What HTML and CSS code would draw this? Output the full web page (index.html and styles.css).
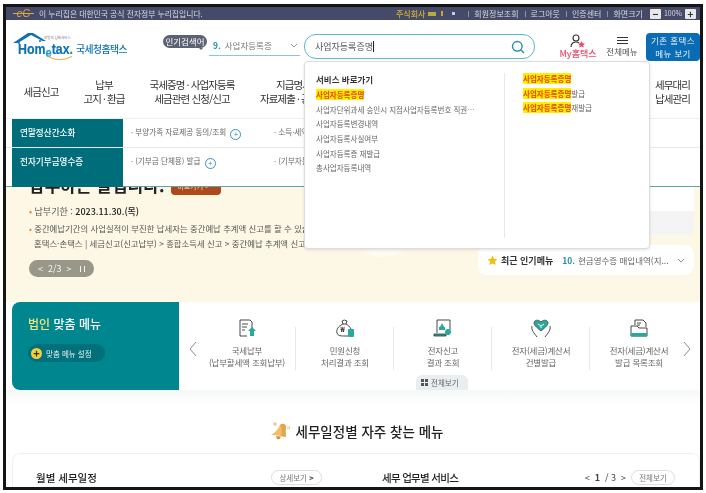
FILE: index.html
```html
<!DOCTYPE html>
<html lang="ko">
  <head>
    <meta charset="UTF-8" />
    <meta name="viewport" content="width=device-width, initial-scale=1.0" />
    <title>국세청 홈택스</title>
    <link rel="stylesheet" href="styles.css">
  </head>
  <body>
    <div class="frame">
      <div class="topbar">
        <div class="gov">
          <span class="eg">eG</span>
          <span>이 누리집은 대한민국 공식 전자정부 누리집입니다.</span>
        </div>
        <div class="util">
          <span class="company">주식회사</span>
          <span class="flag"></span>
          <span class="pin"></span>
          <span class="dot"></span>
          <a>회원정보조회</a>
          <a>로그아웃</a>
          <a>인증센터</a>
          <a>화면크기</a>
          <div class="zoomer">
            <b>−</b>
            <span>100%</span>
            <b>+</b>
          </div>
        </div>
      </div>

      <header class="header">
        <div class="logo">
          <svg width="62" height="30" viewBox="0 0 62 30">
            <path d="M0 11 L15 1 L20 1 L33 9 L29.5 9 L18 3 L5 11 Z" fill="#0d72b5" />
            <path d="M6 10 V12 M27 8 V10" stroke="#0d72b5" stroke-width="1.5" />
            <text x="5" y="21.5" class="logo-main" textLength="55" lengthAdjust="spacingAndGlyphs">Hom<tspan class="logo-e" dy="3.5">e</tspan><tspan dy="-3">tax</tspan><tspan class="logo-dot">.</tspan></text>
            <text x="31" y="7" class="logo-small">안방의 납세서비스</text>
            <path d="M35 24.5 Q46 31 59 24.5" fill="none" stroke="#eaa73c" stroke-width="1" />
          </svg>
          <span class="logo-name">국세청홈택스</span>
        </div>
        <div class="popular">
          <span class="bubble">인기검색어</span>
          <div class="popular-line">
            <b>9.</b>
            <span>사업자등록증</span>
            <svg class="chev" width="8" height="5" viewBox="0 0 8 5"><path d="M1 1 L4 4 L7 1" /></svg>
          </div>
        </div>
        <div class="search">
          <span>사업자등록증명</span><i class="caret"></i>
          <svg class="glass" width="14" height="14" viewBox="0 0 14 14">
            <circle cx="6.3" cy="6.3" r="4.8" />
            <path d="M10 10 L13 13" />
          </svg>
        </div>
        <div class="myhome">
          <svg width="16" height="14" viewBox="0 0 16 14">
            <circle cx="6" cy="4" r="3" fill="none" stroke="#333" stroke-width="1.1" />
            <path d="M1 13 C1 9 4 8 6 8 C7 8 8 8 9 9" fill="none" stroke="#333" stroke-width="1.1" />
            <path d="M11.5 7 L12.7 9.2 L15 9.6 L13.3 11.2 L13.8 13.5 L11.5 12.4 L9.2 13.5 L9.7 11.2 L8 9.6 L10.3 9.2 Z" fill="#e8506e" />
          </svg>
          <span>My홈택스</span>
        </div>
        <div class="allmenu">
          <span class="burger"></span>
          <span>전체메뉴</span>
        </div>
        <div class="oldmenu">기존 홈택스<br />메뉴 보기</div>
      </header>

      <nav class="gnb">
        <a class="g1">세금신고</a>
        <a class="g2">납부<br />고지 · 환급</a>
        <a class="g3">국세증명 · 사업자등록<br />세금관련 신청/신고</a>
        <a class="g4">지급명세서<br />자료제출 · 공익법인</a>
        <a class="g5">세무대리<br />납세관리</a>
      </nav>

      <div class="mega">
        <div class="mega-row short">
          <div class="mega-label">연말정산간소화</div>
          <div class="mega-link first">· 부양가족 자료제공 동의/조회 <i class="plus">+</i></div>
          <div class="mega-link">· 소득·세액공제 자료 조회</div>
        </div>
        <div class="mega-row tall">
          <div class="mega-label">전자기부금영수증</div>
          <div class="mega-link first">· (기부금 단체용) 발급 <i class="plus">+</i></div>
          <div class="mega-link">· (기부자용) 조회</div>
        </div>
      </div>

      <section class="hero">
        <div class="hero-left">
          <div class="hero-title">
            <h1>납부하는 달입니다.</h1>
            <span class="more">바로가기 &gt;</span>
          </div>
          <p class="due"><i>•</i> 납부기한 : <b>2023.11.30.(목)</b></p>
          <p class="note"><i>•</i> 중간예납기간의 사업실적이 부진한 납세자는 중간예납 추계액 신고를 할 수 있습니다.</p>
          <p class="note path">홈택스·손택스 | 세금신고(신고납부) &gt; 종합소득세 신고 &gt; 중간예납 추계액 신고</p>
          <div class="pager">
            <span>&lt;</span>
            <span>2/3</span>
            <span>&gt;</span>
            <span class="pause"></span>
          </div>
        </div>
        <div class="hero-right">
          <div class="side-panel"></div>
          <div class="recent">
            <svg width="11" height="11" viewBox="0 0 12 12"><path d="M6 .5 L7.7 4 L11.5 4.5 L8.7 7.2 L9.4 11 L6 9.2 L2.6 11 L3.3 7.2 L.5 4.5 L4.3 4 Z" fill="#f5c013" /></svg>
            <b class="recent-title">최근 인기메뉴</b>
            <b class="recent-num">10.</b>
            <span class="recent-text">현금영수증 매입내역(지...</span>
            <svg class="chev" width="8" height="5" viewBox="0 0 8 5"><path d="M1 1 L4 4 L7 1" /></svg>
          </div>
        </div>
      </section>

      <section class="custom">
        <div class="custom-left">
          <h2><em>법인</em> 맞춤 메뉴</h2>
          <div class="custom-set"><i>+</i> 맞춤 메뉴 설정</div>
        </div>
        <div class="custom-right">
          <svg class="arrow" width="10" height="16" viewBox="0 0 10 16"><path d="M8 1 L2 8 L8 15" /></svg>
          <div class="item">
            <svg width="20" height="20" viewBox="0 0 20 20">
              <path d="M3 2 H13 L15 4 V10 M3 2 V18 H10" class="ln" />
              <path d="M5 6 H11 M5 9 H10 M5 12 H8" class="ln" />
              <path d="M15 9 L19 13 H17 V18 H13 V13 H11 Z" fill="#2aa7a0" />
            </svg>
            <span>국세납부<br />(납부할세액 조회납부)</span>
          </div>
          <div class="item">
            <svg width="20" height="20" viewBox="0 0 20 20">
              <path d="M7 3 Q9 1 12 3 L11 6 H8 Z" class="ln" />
              <path d="M8 6 C3 8 1 12 2 15 C3 18 6 18 10 18 H13" class="ln" />
              <path d="M11 6 C13 7 15 9 16 11" class="ln" />
              <text x="5.5" y="14" class="won">₩</text>
              <rect x="13" y="11" width="6" height="8" rx="1" fill="#2aa7a0" />
            </svg>
            <span>민원신청<br />처리결과 조회</span>
          </div>
          <div class="item">
            <svg width="20" height="20" viewBox="0 0 20 20">
              <path d="M4 2 H17 V12 M4 2 V15" class="ln" />
              <path d="M1 16 H13 V18 H1 Z" fill="#2aa7a0" stroke="#333" stroke-width=".8" />
              <path d="M9 5 L11 9 H7 Z M6 9 H12 V12 H6 Z" fill="#2aa7a0" />
              <circle cx="15" cy="14" r="3" fill="#2aa7a0" />
            </svg>
            <span>전자신고<br />결과 조회</span>
          </div>
          <div class="item">
            <svg width="20" height="20" viewBox="0 0 20 20">
              <path d="M10 13 C5 9 3 7 3 5 C3 2 7 1 10 4 C13 1 17 2 17 5 C17 7 15 9 10 13 Z" fill="#2aa7a0" stroke="#333" stroke-width=".7" />
              <path d="M1 8 C0 12 3 15 6 19 M19 8 C20 12 17 15 14 19" class="ln" />
              <path d="M7 6 L10 8 L13 6 M10 8 V10" fill="none" stroke="#fff" stroke-width=".9" />
            </svg>
            <span>전자(세금)계산서<br />건별발급</span>
          </div>
          <div class="item">
            <svg width="20" height="20" viewBox="0 0 20 20">
              <path d="M6 7 V2 H14 L17 5 V9" class="ln" />
              <path d="M8 5 H12 M8 7 H11" class="ln" />
              <path d="M2 8 H8 L10 10 H18 V18 H2 Z" class="ln" />
              <rect x="2" y="15" width="16" height="3.5" fill="#2aa7a0" />
            </svg>
            <span>전자(세금)계산서<br />발급 목록조회</span>
          </div>
          <svg class="arrow next" width="10" height="16" viewBox="0 0 10 16"><path d="M2 1 L8 8 L2 15" /></svg>
          <div class="all-tab"><span class="grid-ico"><i></i><i></i><i></i><i></i></span>전체보기</div>
        </div>
      </section>

      <div class="often">
        <svg width="20" height="20" viewBox="0 0 20 20">
          <path d="M1 14 Q7 11 10 4 Q14 1 16 5 Q15 10 16 16 Q8 14 1 14 Z" fill="#f0bd68" />
          <path d="M10 4 Q14 1 16 5 Q15 10 16 16 Q13 15 11 15 Q13 9 10 4 Z" fill="#e3a548" />
          <path d="M6 15 L11 15.5 Q10 19 7 18 Z" fill="#d8912f" />
          <circle cx="5" cy="3" r="1.2" fill="none" stroke="#d8912f" stroke-width=".7" />
          <path d="M18 5 V9 M19.5 5 V8" stroke="#e8c27c" stroke-width=".8" />
        </svg>
        <h2>세무일정별 자주 찾는 메뉴</h2>
      </div>

      <section class="bottom">
        <div class="bottom-col left">
          <h3>월별 세무일정</h3>
          <span class="round-btn">상세보기 <b>&gt;</b></span>
        </div>
        <div class="bottom-col right">
          <h3 class="tight">세무 업무별 서비스</h3>
          <div class="paging">
            <span>&lt;</span> <b>1</b> / 3 <span>&gt;</span>
            <span class="round-btn">전체보기</span>
          </div>
        </div>
      </section>

      <div class="suggest">
        <div class="suggest-left">
          <h4>서비스 바로가기</h4>
          <ul>
            <li><mark>사업자등록증명</mark></li>
            <li>사업자단위과세 승인시 지점사업자등록번호 직권…</li>
            <li>사업자등록변경내역</li>
            <li>사업자등록사실여부</li>
            <li>사업자등록증 재발급</li>
            <li>총사업자등록내역</li>
          </ul>
        </div>
        <div class="suggest-right">
          <ul>
            <li><mark>사업자등록증명</mark></li>
            <li><mark>사업자등록증명</mark>발급</li>
            <li><mark>사업자등록증명</mark>재발급</li>
          </ul>
        </div>
      </div>
    </div>
  </body>
</html>
```

FILE: styles.css
```css
html,
body {
  margin: 0;
  height: 493px;
  overflow: hidden;
  background: #fff;
}

body {
  font-family: "Noto Sans CJK KR", "Noto Sans", sans-serif;
  color: #333;
}

.frame {
  position: relative;
  box-sizing: border-box;
  margin: 4px 3px 0;
  height: 486px;
  border: 3px solid #151515;
  overflow: hidden;
  background: #fff;
  filter: blur(0.4px);
}

h1, h2, h3, h4, p, ul {
  margin: 0;
  padding: 0;
}

i, em {
  font-style: normal;
}

ul {
  list-style: none;
}

/* top bar */
.topbar {
  display: flex;
  justify-content: space-between;
  align-items: center;
  height: 13px;
  padding: 0 4px 0 7px;
  background: #454a68;
  color: #d9dae2;
  font-size: 8px;
  line-height: 13px;
  white-space: nowrap;
}

.gov {
  display: flex;
  align-items: center;
  gap: 5px;
  font-size: 7.8px;
}

.eg {
  width: 21px;
  text-align: center;
  color: #e0a83a;
  font-family: "Liberation Sans", sans-serif;
  font-style: italic;
  font-size: 10px;
  background: linear-gradient(#e0a83a, #e0a83a) center / 100% 1px no-repeat;
}

.util {
  display: flex;
  align-items: center;
}

.company {
  color: #d6b02c;
  font-weight: 500;
  margin-right: 3px;
}

.flag {
  width: 8px;
  height: 4px;
  background: #b8ab3c;
  margin-right: 5px;
}

.pin {
  width: 2px;
  height: 5px;
  background: #c9a43a;
  margin-right: 9px;
}

.dot {
  width: 3px;
  height: 3px;
  background: #c9cbd8;
  margin-right: 7px;
}

.util a {
  padding-left: 6px;
  margin-left: 6px;
  background: linear-gradient(#8d90a6, #8d90a6) left center / 1px 6px no-repeat;
}

.zoomer {
  display: flex;
  align-items: center;
  gap: 3px;
  margin-left: 7px;
  font-size: 7px;
}

.zoomer b {
  width: 11px;
  height: 10px;
  line-height: 10px;
  text-align: center;
  background: #e8e8ec;
  color: #333;
  font-size: 10px;
  border-radius: 1px;
}

/* header */
.header {
  display: flex;
  height: 40px;
  align-items: flex-start;
}

.logo {
  display: flex;
  align-items: flex-start;
  margin: 12px 0 0 7px;
  width: 150px;
}

.logo svg {
  flex: none;
}

.logo-main {
  font: bold 15px "Liberation Sans", sans-serif;
  fill: #0d72b5;
  stroke: #0d72b5;
  stroke-width: 0.2;
}

.logo-e {
  font-size: 13.5px;
  fill: #1d9fc9;
  stroke: #1d9fc9;
}

.logo-dot {
  fill: #3c9c3c;
  stroke: #3c9c3c;
}

.logo-small {
  font-size: 3.5px;
  fill: #777;
}

.logo-name {
  margin: 9px 0 0 1px;
  font-size: 9.8px;
  line-height: 16px;
  font-weight: 500;
  color: #0d72b5;
  letter-spacing: -0.5px;
  white-space: nowrap;
}

.popular {
  position: relative;
  width: 140px;
  padding-top: 15px;
}

.bubble {
  position: absolute;
  left: 0;
  top: 15px;
  width: 44px;
  height: 13px;
  line-height: 12px;
  border-radius: 7px;
  background: #5d6272;
  color: #fff;
  font-size: 8.5px;
  text-align: center;
}

.bubble::after {
  content: "";
  position: absolute;
  right: 4px;
  bottom: -2px;
  border: 2px solid transparent;
  border-top-color: #5d6272;
  border-bottom: 0;
}

.popular-line {
  display: flex;
  align-items: center;
  gap: 4px;
  margin-left: 46px;
  width: 91px;
  height: 21px;
  padding-left: 4px;
  box-sizing: border-box;
  border-bottom: 1px solid #8cc5d8;
  font-size: 8.5px;
  color: #777;
}

.popular-line b {
  color: #1f8fa8;
}

.chev {
  fill: none;
  stroke: #888;
  stroke-width: 0.9;
}

.popular-line .chev {
  margin-left: auto;
  margin-right: 2px;
}

.search {
  display: flex;
  align-items: center;
  box-sizing: border-box;
  width: 231px;
  height: 25px;
  margin: 14px 0 0 1px;
  padding: 0 9px 0 10px;
  border: 1.5px solid #5bb5cf;
  border-radius: 12px;
  font-size: 9px;
  color: #555;
}

.caret {
  width: 1px;
  height: 11px;
  background: #222;
}

.glass {
  margin-left: auto;
  fill: none;
  stroke: #1f8fa8;
  stroke-width: 1.4;
}

.myhome,
.allmenu {
  display: flex;
  flex-direction: column;
  align-items: center;
  white-space: nowrap;
}

.myhome {
  width: 40px;
  margin: 14px 0 0 23px;
  font-size: 9px;
  line-height: 12px;
  color: #e8506e;
  font-weight: 500;
}

.allmenu {
  width: 34px;
  margin: 14px 0 0 7px;
  font-size: 8.5px;
  line-height: 12px;
  color: #555;
}

.burger {
  box-sizing: border-box;
  width: 11px;
  height: 7px;
  margin: 3px 0 1px;
  border-top: 1px solid #333;
  border-bottom: 1px solid #333;
  background: linear-gradient(#333, #333) center / 100% 1px no-repeat;
}

.oldmenu {
  box-sizing: border-box;
  width: 54px;
  height: 28px;
  margin: 13px 0 0 7px;
  padding-top: 1px;
  border-radius: 4px;
  background: #0a6cb5;
  color: #e6f0f8;
  font-size: 8.5px;
  line-height: 13px;
  text-align: center;
  letter-spacing: 0.4px;
}

/* main nav */
.gnb {
  display: flex;
  box-sizing: border-box;
  height: 58px;
  padding-top: 6px;
  align-items: center;
  font-size: 10.5px;
  line-height: 14px;
  letter-spacing: -0.9px;
  color: #333;
  text-align: center;
  white-space: nowrap;
}

.gnb a {
  display: block;
}

.g1 { width: 70px; }
.g2 { width: 56px; }
.g3 { width: 120px; }
.g4 { width: 92px; }
.g5 { margin-left: 311px; }

/* mega menu */
.mega {
  position: relative;
  z-index: 2;
  box-sizing: border-box;
  height: 69px;
  background: #fff;
  border-top: 1px solid #eee;
  border-bottom: 1px solid #5ba6aa;
}

.mega-row {
  display: flex;
  font-size: 7.6px;
  color: #666;
  white-space: nowrap;
}

.mega-row.short {
  height: 28px;
  border-bottom: 1px solid #e8e8e8;
}

.mega-row.tall {
  height: 39px;
}

.mega-label {
  box-sizing: border-box;
  width: 111px;
  margin-left: 6px;
  padding: 6px 0 0 8px;
  background: #006d7a;
  color: #fff;
  font-size: 8.6px;
  font-weight: 500;
  line-height: 14px;
}

.mega-link {
  padding-top: 6px;
  line-height: 14px;
}

.mega-link.first {
  width: 151px;
  padding-left: 8px;
  box-sizing: border-box;
}

.plus {
  display: inline-block;
  width: 9px;
  height: 9px;
  margin-left: 2px;
  border: 1px solid #3c8fc0;
  border-radius: 50%;
  color: #3c8fc0;
  font-size: 8px;
  line-height: 8px;
  text-align: center;
  vertical-align: -2px;
}

/* hero */
.hero {
  position: relative;
  display: flex;
  justify-content: space-between;
  height: 115px;
  padding: 0 6px 0 23px;
  background: #fdf8e6;
}

.hero::after {
  content: "";
  position: absolute;
  left: 344px;
  top: 4px;
  width: 66px;
  height: 66px;
  border-radius: 50%;
  background: #fefbef;
}

.hero-left {
  width: 400px;
  white-space: nowrap;
}

.hero-title {
  display: flex;
  align-items: flex-end;
  gap: 7px;
  height: 20px;
  margin-top: -12px;
}

.hero-title h1 {
  font-size: 17px;
  line-height: 20px;
  font-weight: 700;
  color: #222;
}

.more {
  box-sizing: border-box;
  width: 50px;
  height: 14px;
  padding-left: 6px;
  border-radius: 4px;
  background: #b0491a;
  color: #f3d9c4;
  font-size: 7px;
  line-height: 10px;
}

.due {
  margin-top: 10px;
  font-size: 9px;
  line-height: 14px;
  color: #555;
}

.due b {
  font-weight: 500;
  color: #222;
}

.due i,
.note i {
  color: #e08a2c;
}

.note {
  margin-top: 2px;
  font-size: 8.4px;
  line-height: 14px;
  color: #555;
}

.note.path {
  margin-top: 1px;
  padding-left: 5px;
}

.pager {
  display: flex;
  align-items: center;
  gap: 5px;
  width: 65px;
  height: 17px;
  box-sizing: border-box;
  margin-top: 10px;
  padding-left: 9px;
  border-radius: 9px;
  background: #99968a;
  color: #f5f5f0;
  font-size: 9px;
}

.pause {
  box-sizing: border-box;
  width: 5px;
  height: 6px;
  margin-left: 3px;
  border-left: 1.5px solid #f5f5f0;
  border-right: 1.5px solid #f5f5f0;
}

.hero-right {
  position: relative;
  z-index: 1;
  width: 216px;
}

.side-panel {
  height: 48px;
  border-radius: 0 0 6px 6px;
  background: linear-gradient(#fff 50%, #f4f4f4 50%);
}

.recent {
  display: flex;
  align-items: center;
  gap: 3px;
  box-sizing: border-box;
  height: 30px;
  margin-top: 10px;
  padding: 0 9px;
  border-radius: 9px;
  background: #fff;
  font-size: 8.5px;
  white-space: nowrap;
}

.recent-title {
  color: #333;
  font-weight: 700;
  font-size: 9px;
  margin-right: 6px;
}

.recent-num {
  color: #1f8fa8;
}

.recent-text {
  color: #666;
}

.recent .chev {
  margin-left: auto;
}

/* custom menu */
.custom {
  display: flex;
  height: 88px;
  margin-left: 6px;
  background: #fff;
}

.custom-left {
  box-sizing: border-box;
  width: 167px;
  padding: 14px 0 0 16px;
  border-radius: 8px 0 0 8px;
  background: #00868f;
  color: #fff;
}

.custom-left h2 {
  font-size: 12px;
  line-height: 16px;
  font-weight: 500;
}

.custom-left em {
  color: #f2e27a;
}

.custom-set {
  display: flex;
  align-items: center;
  gap: 4px;
  width: 77px;
  height: 18px;
  margin-top: 12px;
  box-sizing: border-box;
  padding-left: 3px;
  border-radius: 9px;
  background: #02707a;
  color: #e3f1f1;
  font-size: 7.5px;
}

.custom-set i {
  width: 11px;
  height: 11px;
  border-radius: 50%;
  background: #f2cf3c;
  color: #333;
  font-size: 11px;
  font-weight: 700;
  line-height: 10px;
  text-align: center;
}

.custom-right {
  position: relative;
  display: flex;
  flex: 1;
  align-items: flex-start;
  padding-left: 9px;
}

.arrow {
  flex: none;
  margin-top: 39px;
  fill: none;
  stroke: #888;
  stroke-width: 1;
}

.arrow.next {
  margin-left: -6px;
}

.item {
  position: relative;
  display: flex;
  flex-direction: column;
  align-items: center;
  box-sizing: border-box;
  width: 98px;
  padding-top: 16px;
  font-size: 8.5px;
  line-height: 12px;
  color: #666;
  text-align: center;
  white-space: nowrap;
  letter-spacing: -0.2px;
}

.item span {
  margin-top: 6px;
}

.item::after {
  content: "";
  position: absolute;
  right: 0;
  top: 25px;
  height: 43px;
  border-right: 1px solid #e8e8e8;
}

.item:nth-of-type(5)::after {
  display: none;
}

.ln {
  fill: none;
  stroke: #333;
  stroke-width: 0.9;
}

.won {
  font-size: 7px;
  font-weight: 700;
  fill: #333;
}

.all-tab {
  position: absolute;
  left: 237px;
  bottom: 0;
  display: flex;
  align-items: center;
  gap: 3px;
  width: 52px;
  height: 15px;
  box-sizing: border-box;
  padding-left: 5px;
  border-radius: 6px 6px 0 0;
  background: #e9eff0;
  color: #666;
  font-size: 7.5px;
}

.grid-ico {
  display: grid;
  grid-template-columns: 3px 3px;
  gap: 1px;
}

.grid-ico i {
  height: 3px;
  background: #555;
}

/* often used */
.often {
  display: flex;
  justify-content: center;
  align-items: center;
  gap: 6px;
  height: 63px;
  padding: 19px 0 0 7px;
  box-sizing: border-box;
  background: linear-gradient(#f7f8f8, #fff 25%);
}

.often h2 {
  font-size: 13.5px;
  line-height: 20px;
  font-weight: 500;
  color: #222;
}

/* bottom card */
.bottom {
  display: flex;
  gap: 60px;
  height: 40px;
  margin-left: 6px;
  padding: 15px 0 0 23px;
  box-sizing: border-box;
  border: 1px solid #f0f0f0;
  border-radius: 8px;
}

.bottom-col {
  display: flex;
  justify-content: space-between;
  align-items: center;
  height: 17px;
}

.bottom-col.left {
  width: 286px;
}

.bottom-col.right {
  width: 293px;
}

.bottom h3 {
  font-size: 10.5px;
  font-weight: 500;
  color: #222;
}

.bottom h3.tight {
  letter-spacing: -0.7px;
}

.round-btn {
  display: inline-block;
  width: 51px;
  height: 15px;
  box-sizing: border-box;
  border: 1px solid #ddd;
  border-radius: 8px;
  background: #fff;
  color: #777;
  font-size: 7.5px;
  line-height: 13px;
  text-align: center;
}

.round-btn b {
  color: #333;
}

.paging {
  display: flex;
  align-items: center;
  gap: 5px;
  font-size: 9px;
  color: #444;
}

.paging .round-btn {
  width: 44px;
  margin-left: 0;
}

/* search suggestions */
.suggest {
  position: absolute;
  left: 298px;
  top: 54px;
  z-index: 5;
  display: flex;
  box-sizing: border-box;
  width: 346px;
  height: 188px;
  padding: 11px 0 10px 11px;
  border: 1px solid #ddd;
  border-radius: 4px;
  background: #fff;
  box-shadow: 0 1px 3px rgba(0, 0, 0, 0.12);
}

.suggest-left {
  flex: none;
  width: 188px;
  border-right: 1px solid #e8e8e8;
}

.suggest h4 {
  font-size: 8.5px;
  line-height: 12px;
  font-weight: 700;
  color: #333;
  margin-bottom: 3px;
}

.suggest li {
  height: 14.7px;
  font-size: 7.5px;
  line-height: 14.7px;
  color: #666;
  white-space: nowrap;
}

.suggest mark {
  background: #fff000;
  color: #e8420a;
  font-weight: 700;
}

.suggest-right {
  margin-left: 18px;
  margin-top: -1px;
}
```
